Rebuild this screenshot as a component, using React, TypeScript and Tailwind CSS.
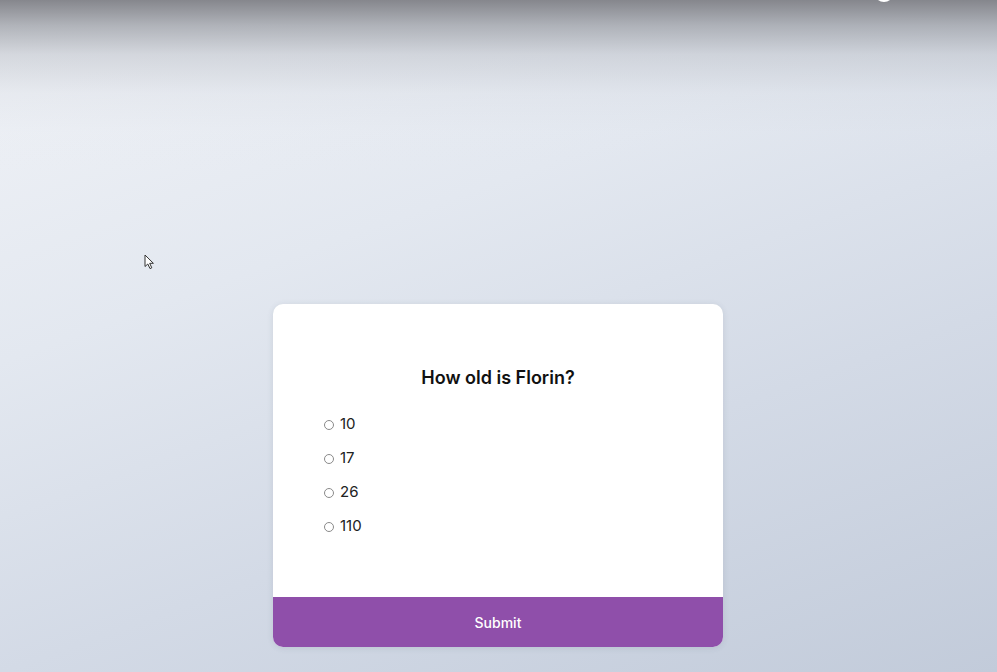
import { useState } from 'react';

const options = ['10', '17', '26', '110'];

const App = () => {
  const [answer, setAnswer] = useState<string | null>(null);

  return (
    <div
      className="relative min-h-screen w-full overflow-hidden bg-[linear-gradient(160deg,#f1f3f7_0%,#e3e8f0_35%,#d3dae6_65%,#c2cbda_100%)] font-['Inter',sans-serif]"
    >
      {/* dark band at the top of the page */}
      <div className="pointer-events-none absolute inset-x-0 top-0 h-[170px] bg-[linear-gradient(to_bottom,rgba(128,129,135,0.95)_0%,rgba(150,153,160,0.7)_15%,rgba(180,184,192,0.45)_32%,rgba(205,209,217,0.2)_55%,rgba(225,229,236,0.06)_78%,rgba(230,233,240,0)_100%)]" />

      {/* partial avatar at top right */}
      <div className="pointer-events-none absolute left-[874px] top-[-18px] h-[20px] w-[20px] rounded-full border-2 border-white" />

      {/* mouse pointer */}
      <svg
        className="pointer-events-none absolute left-[144px] top-[254px]"
        width="11"
        height="16"
        viewBox="0 0 11 16"
      >
        <path
          d="M1 1 L1 12.5 L3.8 10 L6 14.6 L7.8 13.8 L5.7 9.3 L9.4 9.3 Z"
          fill="#fff"
          stroke="#333"
          strokeWidth="1"
          strokeLinejoin="round"
        />
      </svg>

      <div className="relative flex flex-col items-center pr-[1px] pt-[304px]">
        <div className="flex w-[450px] flex-col rounded-[10px] bg-white shadow-[0_1px_6px_rgba(60,70,90,0.12)]">
          <div className="h-[293px] px-[51px] pt-[61px]">
            <h2 className="text-center text-[18px] font-semibold leading-[26px] text-[#111]">
              How old is Florin?
            </h2>
            <ul className="mt-[23px] flex flex-col gap-[13px]">
              {options.map(opt => (
                <li key={opt} className="flex h-[21px] items-center">
                  <label className="flex cursor-pointer items-center gap-[6px]">
                    <input
                      type="radio"
                      name="answer"
                      checked={answer === opt}
                      onChange={() => setAnswer(opt)}
                      className="h-[10px] w-[10px] appearance-none rounded-full border border-[#8a8a8a] checked:border-[3px] checked:border-[#8e4fa9]"
                    />
                    <span className="text-[15px] text-[#222]">{opt}</span>
                  </label>
                </li>
              ))}
            </ul>
          </div>
          <button className="h-[50px] w-full rounded-b-[10px] bg-[#8f4faa] text-[14px] font-medium text-white">
            Submit
          </button>
        </div>
      </div>
    </div>
  );
};

export default App;
